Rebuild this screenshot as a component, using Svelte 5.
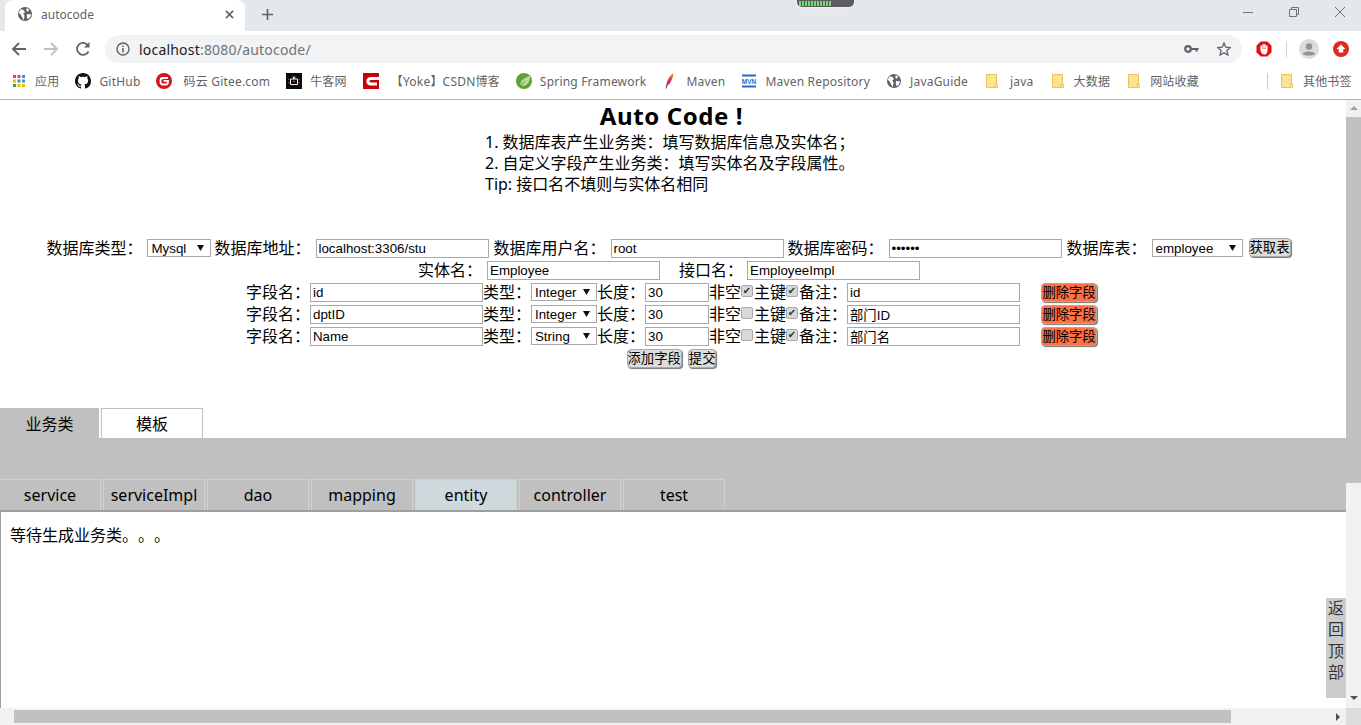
<script>
  const bookmarks = [
    { icon: "apps", label: "应用" },
    { icon: "github", label: "GitHub" },
    { icon: "gitee", label: "码云 Gitee.com", gap: 11 },
    { icon: "nowcoder", label: "牛客网" },
    { icon: "csdn", label: "【Yoke】CSDN博客", gap: 12 },
    { icon: "spring", label: "Spring Framework" },
    { icon: "maven", label: "Maven" },
    { icon: "mvn", label: "Maven Repository" },
    { icon: "globe", label: "JavaGuide" },
    { icon: "folder", label: "java", gap: 10 },
    { icon: "folder", label: "大数据" },
    { icon: "folder", label: "网站收藏" },
  ];

  const fields = [
    { name: "id", type: "Integer", len: "30", notNull: true, key: true, note: "id" },
    { name: "dptID", type: "Integer", len: "30", notNull: false, key: true, note: "部门ID" },
    { name: "Name", type: "String", len: "30", notNull: false, key: true, note: "部门名" },
  ];

  const subTabs = ["service", "serviceImpl", "dao", "mapping", "entity", "controller", "test"];
</script>

{#snippet globe(size)}
  <svg width={size} height={size} viewBox="0 0 16 16">
    <circle cx="8" cy="8" r="8" fill="#5f6368" />
    <path d="M3 2.5 L6.5 3.5 L8 6 L6 7.5 L7.5 10 L6.5 15 L4.5 11.5 L3 8.5 L0.8 6.5Z M10 1 L13 3 L11 5.5 L9.5 4Z M10.5 8 L15.3 8.5 L12.8 13 L10.5 13.5 L10 10Z" fill="#fff" />
  </svg>
{/snippet}

{#snippet folder()}
  <svg width="16" height="16" viewBox="0 0 16 16">
    <path d="M2.5 1.5 H12.5 V14.5 H2.5Z" fill="#fde293" stroke="#eec34f" />
    <rect x="11" y="11" width="2.5" height="3.5" fill="#fde293" stroke="#eec34f" stroke-width="0.8" />
  </svg>
{/snippet}

{#snippet bookmarkIcon(icon)}
  {#if icon === "apps"}
    <svg width="16" height="16" viewBox="0 0 16 16">
      <rect x="2" y="2" width="3" height="3" fill="#ea4335" /><rect x="6.5" y="2" width="3" height="3" fill="#ea4335" /><rect x="11" y="2" width="3" height="3" fill="#4285f4" />
      <rect x="2" y="6.5" width="3" height="3" fill="#fbbc05" /><rect x="6.5" y="6.5" width="3" height="3" fill="#34a853" /><rect x="11" y="6.5" width="3" height="3" fill="#4285f4" />
      <rect x="2" y="11" width="3" height="3" fill="#34a853" /><rect x="6.5" y="11" width="3" height="3" fill="#fbbc05" /><rect x="11" y="11" width="3" height="3" fill="#fbbc05" />
    </svg>
  {:else if icon === "github"}
    <svg width="16" height="16" viewBox="0 0 16 16">
      <path fill="#111" d="M8 0C3.58 0 0 3.58 0 8c0 3.54 2.29 6.53 5.47 7.59.4.07.55-.17.55-.38 0-.19-.01-.82-.01-1.49-2.01.37-2.53-.49-2.69-.94-.09-.23-.48-.94-.82-1.13-.28-.15-.68-.52-.01-.53.63-.01 1.08.58 1.23.82.72 1.21 1.87.87 2.33.66.07-.52.28-.87.51-1.07-1.78-.2-3.64-.89-3.64-3.95 0-.87.31-1.59.82-2.15-.08-.2-.36-1.02.08-2.12 0 0 .67-.21 2.2.82.64-.18 1.32-.27 2-.27s1.36.09 2 .27c1.53-1.04 2.2-.82 2.2-.82.44 1.1.16 1.92.08 2.12.51.56.82 1.27.82 2.15 0 3.07-1.87 3.75-3.65 3.95.29.25.54.73.54 1.48 0 1.07-.01 1.93-.01 2.2 0 .21.15.46.55.38A8.01 8.01 0 0 0 16 8c0-4.42-3.58-8-8-8z" />
    </svg>
  {:else if icon === "gitee"}
    <svg width="16" height="16" viewBox="0 0 16 16">
      <circle cx="8" cy="8" r="8" fill="#d7131f" />
      <path d="M12 5 H7 Q4.5 5 4.5 7.5 V9 Q4.5 11.5 7 11.5 H9.5 Q12 11.5 12 9 V7.8 H7.6" fill="none" stroke="#fff" stroke-width="1.8" />
    </svg>
  {:else if icon === "nowcoder"}
    <svg width="16" height="16" viewBox="0 0 16 16">
      <rect width="16" height="16" fill="#0a0a0a" />
      <path d="M4.5 6 H11.5 V11.5 H4.5Z M7 3.5 L8 6 L9 3.5" fill="none" stroke="#f3f3f3" stroke-width="1" />
      <path d="M2 6 L3.5 7 M14 6 L12.5 7 M2 10 L3.5 9.5 M14 10 L12.5 9.5 M7 8.5 H9" stroke="#e8604c" stroke-width="0.8" />
    </svg>
  {:else if icon === "csdn"}
    <svg width="16" height="16" viewBox="0 0 16 16">
      <rect width="16" height="16" fill="#c7000b" />
      <path d="M16 5.5 H9 Q4.8 5.5 4.8 8.3 T9 11 H14" fill="none" stroke="#fff" stroke-width="3" />
    </svg>
  {:else if icon === "spring"}
    <svg width="16" height="16" viewBox="0 0 16 16">
      <circle cx="8" cy="8" r="8" fill="#5fa134" />
      <path d="M4.5 12.5 C3.5 7.5 8.5 5 14 2.5 C14.5 8 11 14 5.5 13 C7 10 9 8.5 11 7 C8.5 8 6 10 4.5 12.5Z" fill="#b9dc9c" />
    </svg>
  {:else if icon === "maven"}
    <svg width="16" height="16" viewBox="0 0 16 16">
      <defs>
        <linearGradient id="feather" x1="0.8" y1="0" x2="0.2" y2="1">
          <stop offset="0" stop-color="#f28b24" />
          <stop offset="0.5" stop-color="#d8264f" />
          <stop offset="1" stop-color="#8e2a7e" />
        </linearGradient>
      </defs>
      <path d="M11.5 0 C8.5 2 5.5 6 4.5 11 L3.5 15.5 L4.5 15.5 L5.5 12.5 C8.5 10.5 11 5.5 11.5 0Z" fill="url(#feather)" />
    </svg>
  {:else if icon === "mvn"}
    <svg width="16" height="16" viewBox="0 0 16 16">
      <rect x="1" y="1.5" width="14" height="2" fill="#1a6fc4" /><rect x="1" y="12.5" width="14" height="2" fill="#1a6fc4" />
      <text x="8" y="10.5" text-anchor="middle" class="mvn-text">MVN</text>
    </svg>
  {:else if icon === "globe"}
    {@render globe(14)}
  {:else}
    {@render folder()}
  {/if}
{/snippet}

<div class="window">
  <div class="tabstrip">
    <div class="browser-tab">
      {@render globe(14)}
      <span class="tab-title">autocode</span>
      <svg class="tab-close" width="9" height="9" viewBox="0 0 10 10"><path d="M1 1 L9 9 M9 1 L1 9" stroke="#5f6368" stroke-width="1.8" /></svg>
    </div>
    <svg class="new-tab" width="11" height="11" viewBox="0 0 12 12"><path d="M6 0 V12 M0 6 H12" stroke="#5f6368" stroke-width="1.8" /></svg>
    <div class="grip"><span class="grip-ribs"></span></div>
    <div class="win-controls">
      <svg width="10" height="10" viewBox="0 0 10 10"><path d="M0 5.5 H10" stroke="#70757a" /></svg>
      <svg width="10" height="10" viewBox="0 0 10 10"><path d="M0.5 2.5 H7.5 V9.5 H0.5Z M2.5 2.5 V0.5 H9.5 V7.5 H7.5" fill="none" stroke="#70757a" /></svg>
      <svg width="10" height="10" viewBox="0 0 10 10"><path d="M0 0 L10 10 M10 0 L0 10" stroke="#70757a" /></svg>
    </div>
  </div>

  <div class="toolbar">
    <svg width="16" height="16" viewBox="0 0 16 16"><path d="M15 8 H2 M8 2 L2 8 L8 14" fill="none" stroke="#5f6368" stroke-width="1.8" /></svg>
    <svg width="16" height="16" viewBox="0 0 16 16"><path d="M1 8 H14 M8 2 L14 8 L8 14" fill="none" stroke="#bdc1c6" stroke-width="1.8" /></svg>
    <svg width="16" height="16" viewBox="0 0 16 16"><path d="M13.5 10.5 A6 6 0 1 1 13 4.5" fill="none" stroke="#5f6368" stroke-width="1.8" /><path d="M14.5 1 V6.5 H9Z" fill="#5f6368" /></svg>
    <div class="omnibox">
      <svg width="14" height="14" viewBox="0 0 14 14"><circle cx="7" cy="7" r="6" fill="none" stroke="#5f6368" stroke-width="1.4" /><path d="M7 6 V10.5 M7 3.4 V5" stroke="#5f6368" stroke-width="1.5" /></svg>
      <span class="url"><span class="host">localhost</span>:8080/autocode/</span>
      <svg class="key" width="15" height="10" viewBox="0 0 15 10"><circle cx="4" cy="5" r="2.8" fill="none" stroke="#5f6368" stroke-width="2.2" /><path d="M6 4 H14.5 V6 H13.5 V7.5 H11.5 V6 H6Z" fill="#5f6368" /></svg>
      <svg class="star" width="14" height="14" viewBox="0 0 14 14"><path d="M7 1 L8.8 5.2 L13.3 5.6 L9.9 8.6 L10.9 13 L7 10.7 L3.1 13 L4.1 8.6 L0.7 5.6 L5.2 5.2Z" fill="none" stroke="#5f6368" stroke-width="1.3" /></svg>
    </div>
    <div class="extensions">
      <svg width="16" height="16" viewBox="0 0 17 17"><path d="M5 0.5 H12 L16.5 5 V12 L12 16.5 H5 L0.5 12 V5Z" fill="#e0100e" /><path d="M5.5 8 V5 M7.5 8 V3.5 M9.5 8 V3.5 M11.5 8.5 V5 M5.5 8 C5.5 12 7 13.5 9 13.5 C11 13.5 11.5 12 11.5 8.5" stroke="#fff" stroke-width="1.7" fill="#fff" /></svg>
      <span class="ext-sep"></span>
      <svg width="20" height="20" viewBox="0 0 20 20"><circle cx="10" cy="10" r="10" fill="#dadce0" /><circle cx="10" cy="7.5" r="3.2" fill="#8f9296" /><path d="M3.8 15 C4.5 11.5 15.5 11.5 16.2 15 C14 17 6 17 3.8 15Z" fill="#8f9296" /></svg>
      <svg width="16" height="16" viewBox="0 0 16 16"><circle cx="8" cy="8" r="8" fill="#df2a1f" /><path d="M8 3.5 L12.5 8 H10.3 V11.5 H5.7 V8 H3.5Z" fill="#fff" /></svg>
    </div>
  </div>

  <div class="bookmarks">
    {#each bookmarks as b}
      <div class="bookmark" style={`gap:${b.gap ?? 8}px`}>
        <span class="bm-icon">{@render bookmarkIcon(b.icon)}</span>
        <span>{b.label}</span>
      </div>
    {/each}
    <span class="bm-sep"></span>
    <div class="bookmark">
      <span class="bm-icon">{@render folder()}</span>
      <span>其他书签</span>
    </div>
  </div>

  <div class="viewport">
    <div class="page">
      <h1>Auto Code !</h1>
      <div class="intro">
        <div>1. 数据库表产生业务类：填写数据库信息及实体名；</div>
        <div>2. 自定义字段产生业务类：填写实体名及字段属性。</div>
        <div>Tip: 接口名不填则与实体名相同</div>
      </div>

      <form class="gen-form">
        <div class="row r-db">
          <label>数据库类型：</label>
          <select class="s-db ml5"><option>Mysql</option></select>
          <label class="ml3">数据库地址：</label>
          <input class="ml5" value="localhost:3306/stu" />
          <label class="ml5">数据库用户名：</label>
          <input class="ml5" value="root" />
          <label class="ml4">数据库密码：</label>
          <input class="ml5" type="password" value="123456" />
          <label class="ml5">数据库表：</label>
          <select class="s-table ml5"><option>employee</option></select>
          <button type="button" class="btn up ml6">获取表</button>
        </div>
        <div class="row r-entity">
          <label>实体名：</label>
          <input class="ml5" value="Employee" />
          <label class="ml19">接口名：</label>
          <input class="ml4" value="EmployeeImpl" />
        </div>
        {#each fields as f}
          <div class="row r-field">
            <label>字段名：</label>
            <input value={f.name} />
            <label>类型：</label>
            <select class="s-type"><option>{f.type}</option></select>
            <label>长度：</label>
            <input class="short" value={f.len} />
            <label>非空</label>
            <input type="checkbox" checked={f.notNull} onclick={(e) => e.preventDefault()} />
            <label class="ml1">主键</label>
            <input type="checkbox" checked={f.key} onclick={(e) => e.preventDefault()} />
            <label class="ml1">备注：</label>
            <input value={f.note} />
            <button type="button" class="btn del ml21">删除字段</button>
          </div>
        {/each}
        <div class="row r-actions">
          <button type="button" class="btn">添加字段</button>
          <button type="button" class="btn ml6">提交</button>
        </div>
      </form>

      <div class="main-tabs">
        <div class="main-tab active">业务类</div>
        <div class="main-tab">模板</div>
      </div>
      <div class="panel">
        <div class="sub-tabs">
          {#each subTabs as t}
            <div class="sub-tab" class:current={t === "entity"}>{t}</div>
          {/each}
        </div>
      </div>
      <div class="output">等待生成业务类。。。</div>

      <div class="to-top">返回顶部</div>
    </div>

    <div class="v-scroll">
      <span class="arrow up-arrow"></span>
      <div class="v-track"><div class="v-thumb"></div></div>
      <span class="arrow down-arrow"></span>
    </div>
  </div>

  <div class="h-scroll">
    <div class="h-track"><div class="h-thumb"></div></div>
    <span class="arrow right-arrow"></span>
    <span class="corner"></span>
  </div>
</div>

<style>
  :global(body) {
    margin: 0;
    overflow: hidden;
  }

  .window {
    width: 1361px;
    height: 725px;
    display: flex;
    flex-direction: column;
    overflow: hidden;
    font-family: "Noto Sans", "Noto Sans CJK SC", sans-serif;
    text-spacing-trim: space-all;
    color: #000;
    background: #fff;
  }

  /* browser chrome */
  .tabstrip {
    height: 31px;
    flex-shrink: 0;
    display: flex;
    align-items: center;
    background: #e5e8eb;
    position: relative;
  }

  .browser-tab {
    width: 240px;
    height: 31px;
    margin-left: 5px;
    padding: 0 11px 3px 13px;
    box-sizing: border-box;
    display: flex;
    align-items: center;
    background: #fff;
    border-radius: 8px 8px 0 0;
  }

  .tab-title {
    margin-left: 9px;
    flex: 1;
    font-size: 12px;
    color: #5f6368;
  }

  .new-tab {
    margin: 0 0 3px 17px;
  }

  .grip {
    position: absolute;
    left: 797px;
    top: 0;
    width: 57px;
    height: 7px;
    box-sizing: border-box;
    padding: 1px 0 0 2px;
    background: #5c5c5e;
    border-radius: 0 0 5px 5px;
    box-shadow: 0 0 2px #fff;
  }

  .grip-ribs {
    display: block;
    width: 32px;
    height: 5px;
    background: repeating-linear-gradient(90deg, #70d870 0 2px, #5c5c5e 2px 3px);
  }

  .win-controls {
    margin-left: auto;
    margin-right: 16px;
    display: flex;
    gap: 36px;
    padding-bottom: 8px;
  }

  .toolbar {
    height: 36px;
    flex-shrink: 0;
    box-sizing: border-box;
    padding: 0 0 0 11px;
    display: flex;
    align-items: center;
    gap: 16px;
    background: #fff;
  }

  .omnibox {
    width: 1137px;
    height: 28px;
    margin-left: -2px;
    padding: 0 11px 0 11px;
    box-sizing: border-box;
    display: flex;
    align-items: center;
    background: #f1f3f4;
    border-radius: 14px;
  }

  .url {
    margin-left: 9px;
    flex: 1;
    font-size: 14px;
    letter-spacing: 0.2px;
    color: #70757a;
  }

  .host {
    color: #202124;
  }

  .star {
    margin-left: 18px;
  }

  .extensions {
    display: flex;
    align-items: center;
    margin-left: -2px;
  }

  .ext-sep {
    width: 1px;
    height: 16px;
    margin: 0 12px 0 14px;
    background: #d0d2d5;
  }

  .extensions svg:last-child {
    margin-left: 14px;
  }

  .bookmarks {
    height: 33px;
    flex-shrink: 0;
    box-sizing: border-box;
    padding: 0 0 4px 11px;
    display: flex;
    align-items: center;
    gap: 16px;
    background: #fff;
    border-bottom: 1px solid #b3b3b3;
  }

  .bookmark {
    display: flex;
    align-items: center;
    gap: 8px;
    font-size: 12px;
    letter-spacing: 0.2px;
    color: #5f6368;
    white-space: nowrap;
  }

  .bm-icon {
    width: 16px;
    height: 16px;
    flex-shrink: 0;
    display: flex;
    align-items: center;
    justify-content: center;
  }

  .bm-sep {
    width: 1px;
    height: 16px;
    margin: 0 -5px 0 52px;
    background: #ccc;
  }

  .mvn-text {
    font-family: "Liberation Sans", sans-serif;
    font-size: 6.5px;
    font-weight: 700;
    fill: #1a6fc4;
    letter-spacing: 0;
  }

  /* page */
  .viewport {
    flex: 1;
    min-height: 0;
    display: flex;
  }

  .page {
    flex: 1;
    min-width: 0;
    position: relative;
    overflow: hidden;
  }

  h1 {
    margin: 0;
    height: 32px;
    text-align: center;
    font-size: 24px;
    line-height: 31px;
    font-weight: 700;
    letter-spacing: 0.6px;
    padding-right: 3px;
  }

  .intro {
    margin-left: 485px;
    font-size: 16px;
    line-height: 21px;
  }

  .gen-form {
    margin-top: 43px;
  }

  .row {
    height: 22px;
    box-sizing: border-box;
    padding-top: 1px;
    display: flex;
    justify-content: center;
    align-items: flex-start;
    white-space: nowrap;
  }

  .r-db {
    padding-right: 9px;
  }

  .r-entity {
    padding-right: 8px;
  }

  .r-field {
    padding-right: 3px;
  }

  .r-actions {
    padding-right: 3px;
  }

  label {
    font-size: 16px;
    line-height: 19px;
  }

  input:not([type="checkbox"]) {
    width: 173px;
    height: 19px;
    box-sizing: border-box;
    padding: 1px 2px;
    border: 1px solid #a9a9a9;
    background: #fff;
    font-family: "Liberation Sans", "Noto Sans CJK SC", sans-serif;
    font-size: 13.33px;
    color: #000;
    outline: none;
  }

  input.short {
    width: 64px;
  }

  input[type="checkbox"] {
    appearance: none;
    width: 12px;
    height: 12px;
    margin: 2px 0 0;
    box-sizing: border-box;
    border: 1px solid #a9a9a9;
    border-radius: 2px;
    background: #d8d8d8;
    display: flex;
    align-items: center;
    justify-content: center;
    font-size: 10px;
    line-height: 10px;
    color: #333;
    font-family: "DejaVu Sans", sans-serif;
  }

  input[type="checkbox"]:checked::before {
    content: "✔";
  }

  select {
    height: 18px;
    box-sizing: border-box;
    appearance: none;
    padding: 0 0 0 3px;
    border: 1px solid #a9a9a9;
    border-radius: 0;
    background: #fff url("data:image/svg+xml,%3Csvg xmlns='http://www.w3.org/2000/svg' width='7' height='6'%3E%3Cpath d='M0 0H7L3.5 6Z' fill='%23111'/%3E%3C/svg%3E") no-repeat right 6px center;
    font-family: "Liberation Sans", sans-serif;
    font-size: 13.33px;
    color: #000;
  }

  .s-db {
    width: 64px;
  }

  .s-table {
    width: 91px;
  }

  .s-type {
    width: 66px;
  }

  .btn {
    height: 19px;
    padding: 0 0 1px;
    box-sizing: border-box;
    border: 1px solid #aaa;
    border-radius: 4px;
    background: #ddd;
    box-shadow: 1px 1px 1px #777;
    font-family: "Noto Sans CJK SC", sans-serif;
    font-size: 13.33px;
    line-height: 16px;
    color: #000;
  }

  .btn.up {
    margin-top: -1px;
  }

  .btn.del {
    width: 56px;
    background: #ff7043;
  }

  .ml1 { margin-left: 1px; }
  .ml3 { margin-left: 3px; }
  .ml4 { margin-left: 4px; }
  .ml5 { margin-left: 5px; }
  .ml6 { margin-left: 6px; }
  .ml19 { margin-left: 19px; }
  .ml21 { margin-left: 21px; }

  .main-tabs {
    margin-top: 38px;
    height: 30px;
    display: flex;
    gap: 2px;
  }

  .main-tab {
    width: 102px;
    height: 30px;
    box-sizing: border-box;
    border: 1px solid #c0c0c0;
    border-bottom: none;
    text-align: center;
    font-size: 16px;
    line-height: 30px;
  }

  .main-tab.active {
    width: 99px;
    background: #c0c0c0;
  }

  .panel {
    height: 72px;
    box-sizing: border-box;
    padding-top: 41px;
    background: #c0c0c0;
  }

  .sub-tabs {
    display: flex;
    gap: 2px;
  }

  .sub-tab {
    width: 102px;
    height: 31px;
    box-sizing: border-box;
    border: 1px solid #d0d0d0;
    border-bottom: none;
    text-align: center;
    font-size: 16px;
    line-height: 30px;
  }

  .sub-tab:first-child {
    width: 101px;
    border-left: none;
  }

  .sub-tab.current {
    background: #cfd8dc;
  }

  .output {
    height: 200px;
    box-sizing: border-box;
    padding: 11px 9px;
    border-top: 2px solid #9e9e9e;
    border-left: 1px solid #9e9e9e;
    font-size: 16px;
    line-height: 24px;
  }

  .to-top {
    position: absolute;
    right: 0;
    bottom: 10px;
    width: 20px;
    height: 100px;
    padding-top: 0;
    box-sizing: border-box;
    background: #ccc;
    font-size: 16px;
    line-height: 21.3px;
    text-align: center;
    color: #333;
  }

  /* scrollbars */
  .v-scroll {
    width: 15px;
    flex-shrink: 0;
    display: flex;
    flex-direction: column;
    align-items: center;
    background: #f1f1f1;
  }

  .v-track {
    flex: 1;
    width: 100%;
  }

  .v-thumb {
    height: 366px;
    margin-top: 7px;
    background: #c1c1c1;
  }

  .arrow {
    width: 0;
    height: 0;
    flex-shrink: 0;
    border-style: solid;
  }

  .up-arrow {
    margin: 6px 0 0;
    border-width: 0 4px 4px;
    border-color: transparent transparent #a3a3a3;
  }

  .down-arrow {
    margin: 0 0 8px;
    border-width: 4px 4px 0;
    border-color: #505050 transparent transparent;
  }

  .h-scroll {
    height: 17px;
    flex-shrink: 0;
    display: flex;
    align-items: center;
    background: #f1f1f1;
  }

  .h-track {
    flex: 1;
    height: 100%;
    box-sizing: border-box;
    padding: 2px 0 2px 14px;
  }

  .h-thumb {
    width: 1217px;
    height: 100%;
    background: #c1c1c1;
  }

  .right-arrow {
    margin-right: 6px;
    border-width: 4px 0 4px 4px;
    border-color: transparent transparent transparent #505050;
  }

  .corner {
    width: 15px;
    height: 100%;
    background: #dcdcdc;
  }
</style>
